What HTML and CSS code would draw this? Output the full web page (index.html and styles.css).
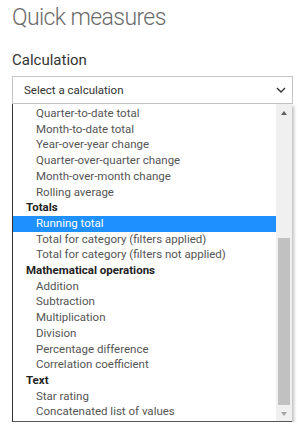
FILE: index.html
```html
<!DOCTYPE html>
<html lang="en">
<head>
  <meta charset="UTF-8" />
  <title>Quick measures</title>
  <link rel="stylesheet" href="styles.css">
</head>
<body>

  <h1 class="title">Quick measures</h1>

  <div class="field">
    <label class="field-label">Calculation</label>

    <div class="select-box">
      <span>Select a calculation</span>
      <svg class="chevron" width="10" height="6" viewBox="0 0 10 6">
        <path d="M1 1 L5 5 L9 1" fill="none" stroke="#333" stroke-width="1.4"/>
      </svg>
    </div>

    <!-- open dropdown -->
    <div class="dropdown">
      <ul class="options">
        <li class="item">Quarter-to-date total</li>
        <li class="item">Month-to-date total</li>
        <li class="item">Year-over-year change</li>
        <li class="item">Quarter-over-quarter change</li>
        <li class="item">Month-over-month change</li>
        <li class="item">Rolling average</li>
        <li class="group">Totals</li>
        <li class="item selected">Running total</li>
        <li class="item">Total for category (filters applied)</li>
        <li class="item">Total for category (filters not applied)</li>
        <li class="group">Mathematical operations</li>
        <li class="item">Addition</li>
        <li class="item">Subtraction</li>
        <li class="item">Multiplication</li>
        <li class="item">Division</li>
        <li class="item">Percentage difference</li>
        <li class="item">Correlation coefficient</li>
        <li class="group">Text</li>
        <li class="item">Star rating</li>
        <li class="item">Concatenated list of values</li>
      </ul>

      <div class="scrollbar">
        <div class="arrow up"></div>
        <div class="track">
          <div class="thumb"></div>
        </div>
        <div class="arrow down"></div>
      </div>
    </div>
  </div>

</body>
</html>
```

FILE: styles.css
```css
body {
  margin: 0;
  padding: 0 5px 0 12px;
  font-family: Roboto, "Noto Sans", sans-serif;
  background: #fff;
  color: #333;
}

.title {
  margin: 0;
  padding-top: 2px;
  font-weight: 300;
  font-size: 23px;
  line-height: 32px;
  letter-spacing: -0.6px;
  color: #6b6b6b;
}

.field {
  margin-top: 15px;
}

.field-label {
  display: block;
  font-size: 15px;
  line-height: 22px;
  color: #333;
}

.select-box {
  margin-top: 5px;
  height: 26px;
  border: 1px solid #c4c4c4;
  display: flex;
  align-items: center;
  justify-content: space-between;
  padding: 0 6px 0 11px;
  font-size: 11.5px;
  color: #333;
}

/* Dropdown list */
.dropdown {
  display: flex;
  width: 279px;
  height: 317px;
  border-left: 1px solid #333;
  border-bottom: 1px solid #555;
  box-shadow: 2px 2px 3px rgba(0,0,0,0.25);
  background: #fff;
}

.options {
  flex: 1;
  list-style: none;
  margin: 0;
  padding: 2px 0 0;
  font-size: 11.5px;
  line-height: 15.7px;
}

.options li {
  white-space: nowrap;
}

.item {
  padding-left: 23px;
  color: #555;
}

.group {
  padding-left: 13px;
  font-weight: bold;
  color: #222;
}

.item.selected {
  background: #1e90ff;
  color: #fff;
}

.scrollbar {
  width: 16px;
  background: #f0f0f0;
  display: flex;
  flex-direction: column;
}

.arrow {
  height: 17px;
  position: relative;
}

.arrow.up::after,
.arrow.down::after {
  content: "";
  position: absolute;
  left: 5px;
  border-left: 3.5px solid transparent;
  border-right: 3.5px solid transparent;
}

.arrow.up::after {
  top: 7px;
  border-bottom: 4px solid #606060;
}

.arrow.down::after {
  top: 7px;
  border-top: 4px solid #a3a3a3;
}

.track {
  flex: 1;
  padding: 0 2px;
}

.thumb {
  margin-top: 117px;
  height: 167px;
  background: #c1c1c1;
}
```
